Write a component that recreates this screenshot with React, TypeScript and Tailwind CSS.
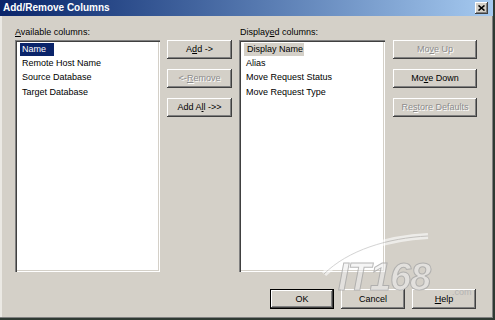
const bevel =
  'shadow-[inset_-1px_-1px_0_#404040,inset_1px_1px_0_#ffffff,inset_-2px_-2px_0_#808080,inset_2px_2px_0_#d4d0c8]';
const sunken =
  'shadow-[inset_1px_1px_0_#808080,inset_2px_2px_0_#404040,inset_-1px_-1px_0_#ffffff,inset_-2px_-2px_0_#d4d0c8]';

type BtnProps = {
  children: React.ReactNode;
  disabled?: boolean;
  width: string;
  height?: string;
  isDefault?: boolean;
};

function Btn({ children, disabled, width, height = 'h-[19px]', isDefault }: BtnProps) {
  const face = (
    <div
      className={`flex h-full w-full items-center justify-center bg-[#d4d0c8] text-[9px] leading-none ${bevel} ${
        disabled ? 'text-[#8c8c8c] [text-shadow:1px_1px_0_#ffffff]' : 'text-black'
      }`}
    >
      {children}
    </div>
  );
  if (isDefault) {
    return <div className={`${width} ${height} border border-black`}>{face}</div>;
  }
  return <div className={`${width} ${height}`}>{face}</div>;
}

function Key({ children }: { children: React.ReactNode }) {
  return <span className="underline underline-offset-[1px]">{children}</span>;
}

function ListBox({ items, active }: { items: string[]; active: boolean }) {
  return (
    <div className={`h-[232px] bg-white pl-[5px] pt-[2px] ${sunken}`}>
      {items.map((item, i) => (
        <div key={item} className="flex h-[14.3px] items-center text-[9px] text-black">
          {i === 0 ? (
            <span
              className={
                active
                  ? 'bg-[#0a246a] pl-[2px] pr-[8px] text-white leading-[13px]'
                  : 'bg-[#d4d0c8] pl-[3px] pr-[1px] leading-[13px]'
              }
            >
              {item}
            </span>
          ) : (
            <span className="pl-[2px] leading-[13px]">{item}</span>
          )}
        </div>
      ))}
    </div>
  );
}

export default function App() {
  return (
    <div
      className="relative flex h-[320px] w-[495px] flex-col overflow-hidden bg-[#d4d0c8] shadow-[inset_-2px_-2px_0_#2f3a33,inset_-3px_-3px_0_#808080,inset_2px_0_0_#ebe9e4]"
      style={{ fontFamily: '"Liberation Sans", Arial, sans-serif' }}
    >
      {/* title bar */}
      <div className="flex h-[16px] w-[493px] items-center justify-between bg-gradient-to-r from-[#0a246a] to-[#a6caf0] pl-[3px] pr-[5px]">
        <span className="text-[10px] font-bold leading-none text-white">Add/Remove Columns</span>
        <div className={`flex h-[12px] w-[13px] items-center justify-center bg-[#d4d0c8] ${bevel}`}>
          <svg width="7" height="6" viewBox="0 0 7 6">
            <path d="M0.5 0.5 L6.5 5.5 M6.5 0.5 L0.5 5.5" stroke="#000" strokeWidth="1.6" />
          </svg>
        </div>
      </div>

      <div className="flex flex-col pl-[15px] pt-[11px]">
        <div className="flex h-[11px] text-[9px] leading-[11px] text-black">
          <span className="w-[225px]">
            <Key>A</Key>vailable columns:
          </span>
          <span>
            Display<Key>e</Key>d columns:
          </span>
        </div>

        <div className="mt-[2px] flex">
          <div className="w-[145px]">
            <ListBox
              active
              items={['Name', 'Remote Host Name', 'Source Database', 'Target Database']}
            />
          </div>
          <div className="ml-[7px] flex flex-col gap-[10px]">
            <Btn width="w-[65px]">
              A<Key>d</Key>d -&gt;
            </Btn>
            <Btn width="w-[65px]" disabled>
              &lt;- <Key>R</Key>emove
            </Btn>
            <Btn width="w-[65px]">
              Add A<Key>l</Key>l -&gt;&gt;
            </Btn>
          </div>
          <div className="ml-[7px] w-[146px]">
            <ListBox
              active={false}
              items={['Display Name', 'Alias', 'Move Request Status', 'Move Request Type']}
            />
          </div>
          <div className="ml-[8px] flex flex-col gap-[10px]">
            <Btn width="w-[84px]" disabled>
              Mo<Key>v</Key>e Up
            </Btn>
            <Btn width="w-[84px]">
              Mo<Key>v</Key>e Down
            </Btn>
            <Btn width="w-[84px]" disabled>
              Re<Key>s</Key>tore Defaults
            </Btn>
          </div>
        </div>

        <div className="mt-[17px] flex gap-[7px] pl-[255px]">
          <Btn width="w-[64px]" height="h-[20px]" isDefault>
            OK
          </Btn>
          <Btn width="w-[64px]" height="h-[20px]">
            Cancel
          </Btn>
          <Btn width="w-[64px]" height="h-[20px]">
            <Key>H</Key>elp
          </Btn>
        </div>
      </div>

      {/* watermark */}
      <div className="pointer-events-none absolute left-[318px] top-[232px] opacity-60">
        <svg width="130" height="45" viewBox="0 0 130 45">
          <path d="M6 42 C 30 18, 70 6, 110 4" stroke="#ffffff" strokeWidth="6" fill="none" />
          <path d="M6 42 C 30 18, 70 6, 110 4" stroke="#b8b8b8" strokeWidth="1" fill="none" />
        </svg>
      </div>
      <div className="pointer-events-none absolute left-[338px] top-[258px] text-[38px] font-bold italic leading-none tracking-[-1px] text-[#ececec]/70 opacity-80 [-webkit-text-stroke:1px_#a8a8a8]">
        IT168
      </div>
      <div className="pointer-events-none absolute left-[452px] top-[288px] text-[9px] leading-none text-[#b4b4b4]">
        .com
      </div>
    </div>
  );
}
